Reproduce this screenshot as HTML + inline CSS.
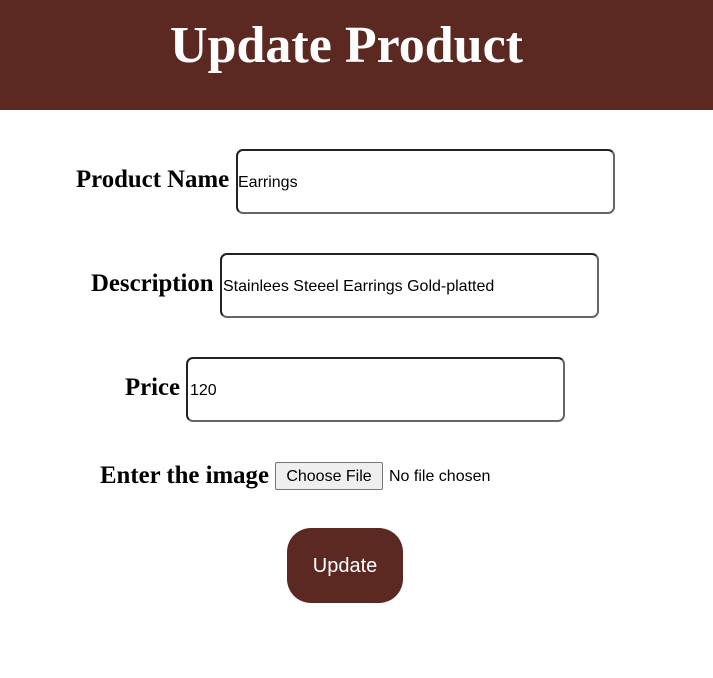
<!DOCTYPE html>
<html><head><style>
body{margin:0;width:713px;height:678px;background:#fff;position:relative;overflow:hidden;font-family:"Liberation Sans",sans-serif}
.hd{position:absolute;left:0;top:0;width:713px;height:110px;background:#5c2822}
.hd h1{margin:0;position:absolute;left:0;width:693px;text-align:center;top:16px;font:bold 52px "Liberation Serif",serif;color:#fff}
.l{position:absolute;font:bold 24.8px "Liberation Serif",serif;color:#000;line-height:28px}
.i{position:absolute;box-sizing:border-box;border:2px solid #222;border-right-color:#666;border-bottom-color:#666;border-radius:7px;height:65px;font-size:16px;line-height:63px;padding-left:0px;color:#000}
.t{position:absolute;font-size:16px;color:#000}
.btn{position:absolute;left:275px;top:462px;width:108px;height:28px;box-sizing:border-box;border:1px solid #767676;background:#efefef;border-radius:2px;font-size:16px;text-align:center;line-height:28px}
.up{position:absolute;left:287px;top:528px;width:116px;height:75px;background:#5c2822;border-radius:24px;color:#fff;font-size:20px;text-align:center;line-height:76px}
</style></head><body>
<div class="hd"><h1>Update Product</h1></div>
<div class="l" style="left:76px;top:166px">Product Name</div>
<div class="i" style="left:236px;top:149px;width:379px">Earrings</div>
<div class="l" style="left:91px;top:270px">Description</div>
<div class="i" style="left:220px;top:253px;width:379px;padding-left:1px">Stainlees Steeel Earrings Gold-platted</div>
<div class="l" style="left:125px;top:374px">Price</div>
<div class="i" style="left:186px;top:357px;width:379px;padding-left:2px">120</div>
<div class="l" style="left:100px;top:462px">Enter the image</div>
<div class="btn">Choose File</div>
<div class="t" style="left:389px;top:468px">No file chosen</div>
<div class="up">Update</div>
</body></html>
